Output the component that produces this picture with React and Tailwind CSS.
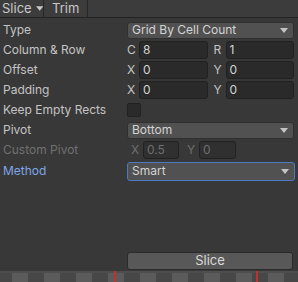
import React from "react";

function Caret({ className = "" }) {
  return (
    <svg width="8" height="5" viewBox="0 0 8 5" className={className}>
      <path d="M0 0H8L4 5Z" fill="currentColor" />
    </svg>
  );
}

function Dropdown({ value, active }) {
  return (
    <div
      className={
        "flex items-center justify-between pl-[4px] pr-[5px] rounded-[3px] border bg-[#515151] text-[#d4d4d4] " +
        (active ? "border-[#4c7ac0] h-[19px] -mr-[1px]" : "border-[#303030] h-[17px]")
      }
    >
      <span>{value}</span>
      <Caret className="text-[#c4c4c4]" />
    </div>
  );
}

function Field({ label, value, width = "flex-1", dim }) {
  return (
    <div className={"flex items-center " + width}>
      <span className={"w-[12px] " + (dim ? "text-[#6e6e6e]" : "text-[#c4c4c4]")}>{label}</span>
      <div
        className={
          "flex-1 h-[18px] flex items-center pl-[3px] rounded-[3px] border border-[#212121] " +
          (dim ? "text-[#6e6e6e] bg-[#303030]" : "text-[#d4d4d4] bg-[#2a2a2a]")
        }
      >
        {value}
      </div>
    </div>
  );
}

function Row({ label, children, labelClass = "text-[#c4c4c4]", h = "h-[20px]" }) {
  return (
    <div className={"flex items-center " + h}>
      <div className={"w-[127px] pl-[3px] " + labelClass}>{label}</div>
      <div className="w-[167px]">{children}</div>
    </div>
  );
}

export default function App() {
  return (
    <div
      className="w-[298px] h-[282px] bg-[#383838] text-[12px] flex flex-col overflow-hidden"
      style={{ fontFamily: "Inter, 'Noto Sans', sans-serif" }}
    >
      <div className="flex h-[18px] bg-[#3c3c3c] border-b border-[#232323] text-[#c8c8c8] text-[13px]">
        <div className="flex items-center gap-[4px] pl-[2px] w-[44px] border-r border-[#262626]">
          <span>Slice</span>
          <Caret />
        </div>
        <div className="flex items-center pl-[8px] w-[44px] border-r border-[#262626]">Trim</div>
      </div>

      <div className="flex flex-col pt-[2px]">
        <Row label="Type">
          <Dropdown value="Grid By Cell Count" />
        </Row>
        <Row label="Column & Row">
          <div className="flex gap-[6px]">
            <Field label="C" value="8" />
            <Field label="R" value="1" />
          </div>
        </Row>
        <Row label="Offset">
          <div className="flex gap-[6px]">
            <Field label="X" value="0" />
            <Field label="Y" value="0" />
          </div>
        </Row>
        <Row label="Padding">
          <div className="flex gap-[6px]">
            <Field label="X" value="0" />
            <Field label="Y" value="0" />
          </div>
        </Row>
        <Row label="Keep Empty Rects">
          <div className="w-[14px] h-[14px] rounded-[2px] border border-[#212121] bg-[#2a2a2a]" />
        </Row>
        <Row label="Pivot">
          <Dropdown value="Bottom" />
        </Row>
        <Row label="Custom Pivot" labelClass="text-[#707070]">
          <div className="flex gap-[8px]">
            <Field label="X" value="0.5" width="w-[52px] pl-[4px]" dim />
            <Field label="Y" value="0" width="w-[49px]" dim />
          </div>
        </Row>
        <Row label="Method" labelClass="text-[#7ea6e6]" h="h-[22px]">
          <Dropdown value="Smart" active />
        </Row>
      </div>

      <div className="flex-1" />

      <div className="flex pl-[127px] pr-[5px] pb-[1px]">
        <div className="flex-1 h-[18px] flex items-center justify-center rounded-[3px] border border-[#2b2b2b] bg-[#585858] text-[#d8d8d8] text-[13px]">
          Slice
        </div>
      </div>

      <div className="relative h-[11px] flex flex-col">
        <div className="h-[2px] bg-[#4e4e4e]" />
        <div
          className="flex-1"
          style={{
            backgroundImage:
              "repeating-linear-gradient(90deg, #474747 0px, #474747 12px, #5b5b5b 12px, #5b5b5b 28px, #474747 28px, #474747 32px)",
          }}
        />
        <div className="absolute left-[114px] top-0 bottom-0 w-[2px] bg-[#c0302d]" />
        <div className="absolute left-[256px] top-0 bottom-0 w-[2px] bg-[#c0302d]" />
      </div>
    </div>
  );
}
